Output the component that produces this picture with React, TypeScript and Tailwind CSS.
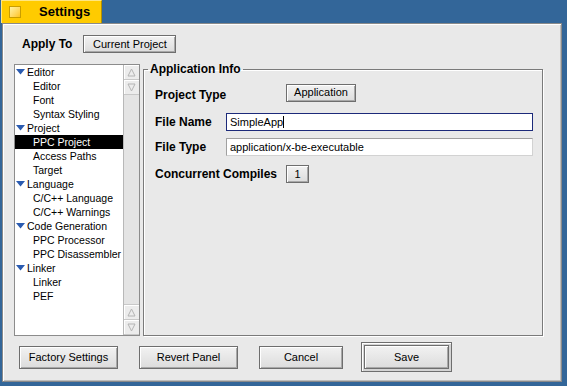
import React from 'react';

type Item = { label: string; header?: boolean; selected?: boolean };

const items: Item[] = [
  { label: 'Editor', header: true },
  { label: 'Editor' },
  { label: 'Font' },
  { label: 'Syntax Styling' },
  { label: 'Project', header: true },
  { label: 'PPC Project', selected: true },
  { label: 'Access Paths' },
  { label: 'Target' },
  { label: 'Language', header: true },
  { label: 'C/C++ Language' },
  { label: 'C/C++ Warnings' },
  { label: 'Code Generation', header: true },
  { label: 'PPC Processor' },
  { label: 'PPC Disassembler' },
  { label: 'Linker', header: true },
  { label: 'Linker' },
  { label: 'PEF' },
];

function BeButton({ children, className = '' }: { children: React.ReactNode; className?: string }) {
  return (
    <div
      className={`flex items-center justify-center whitespace-nowrap bg-gradient-to-b from-[#f2f2f2] to-[#dcdcdc] border border-[#6e6e6e] shadow-[inset_1px_1px_0_#ffffff,inset_-1px_-1px_0_#a8a8a8] text-[11px] text-black ${className}`}
    >
      {children}
    </div>
  );
}

function Arrow({ up }: { up?: boolean }) {
  return (
    <div className="h-[15px] flex items-center justify-center bg-[#ececec] border-b border-[#c8c8c8] shadow-[inset_1px_1px_0_#ffffff]">
      <svg width="9" height="9" viewBox="0 0 9 9">
        {up ? (
          <path d="M4.5 1 L8 8 L1 8 Z" fill="none" stroke="#b4b4b4" strokeWidth="1" />
        ) : (
          <path d="M1 1 L8 1 L4.5 8 Z" fill="none" stroke="#b4b4b4" strokeWidth="1" />
        )}
      </svg>
    </div>
  );
}

function Triangle() {
  return (
    <svg width="9" height="6" viewBox="0 0 9 6" className="shrink-0">
      <path d="M0 0 L9 0 L4.5 5.5 Z" fill="#2a5bb0" />
    </svg>
  );
}

export default function App() {
  const font = { fontFamily: '"Liberation Sans", Arial, sans-serif' };
  return (
    <div className="w-[567px] h-[386px] bg-[#336699] overflow-hidden flex flex-col" style={font}>
      {/* Tab */}
      <div className="ml-[1px] w-[101px] h-[23px] bg-[#ffcb00] border-t border-l border-[#ffe680] border-r border-r-[#b38f00] flex items-center shrink-0">
        <div className="ml-[7px] w-[12px] h-[12px] border border-[#c99d00] bg-gradient-to-br from-[#fff3a0] to-[#ffc400]" />
        <span className="ml-[18px] text-[13px] font-bold text-black">Settings</span>
      </div>

      {/* Window */}
      <div className="ml-[2px] w-[560px] h-[359px] bg-[#e9e9e9] border border-[#8a8a8a] shadow-[inset_1px_1px_0_#ffffff,inset_-1px_-1px_0_#bdbdbd] flex flex-col px-[11px]">
        <div className="mt-[11px] h-[18px] flex items-center">
          <span className="ml-[8px] text-[12px] font-bold text-black">Apply To</span>
          <BeButton className="ml-[11px] w-[93px] h-[18px]">Current Project</BeButton>
        </div>

        <div className="mt-[11px] flex h-[272px]">
          {/* List */}
          <div className="w-[126px] h-full bg-white border border-[#8c8c8c] flex overflow-hidden">
            <div className="flex-1 min-w-0 flex flex-col overflow-hidden">
              {items.map((it, i) => (
                <div
                  key={i}
                  className={`h-[14px] shrink-0 flex items-center whitespace-nowrap text-[10.5px] leading-none ${
                    it.selected ? 'bg-black text-white' : 'text-black'
                  } ${it.header ? 'pl-[1px]' : 'pl-[18px]'}`}
                >
                  {it.header && <Triangle />}
                  <span className={it.header ? 'ml-[2px]' : ''}>{it.label}</span>
                </div>
              ))}
            </div>
            <div className="w-[16px] shrink-0 border-l border-[#b8b8b8] bg-[#e4e4e4] flex flex-col justify-between">
              <div>
                <Arrow up />
                <Arrow />
              </div>
              <div className="border-t border-[#c8c8c8]">
                <Arrow up />
                <Arrow />
              </div>
            </div>
          </div>

          {/* Group box */}
          <fieldset className="ml-[3px] mt-[-2px] w-[400px] h-[274px] border border-[#7a7a7a] shadow-[1px_1px_0_#ffffff,inset_1px_1px_0_#ffffff] min-w-0">
            <legend className="ml-[4px] px-[2px] text-[12px] font-bold text-black leading-[14px]">
              Application Info
            </legend>
            <div className="flex flex-col pl-[11px] pr-[9px] pt-[7px]">
              <div className="h-[19px] flex items-center">
                <span className="w-[131px] text-[12px] font-bold text-black translate-y-[2px]">Project Type</span>
                <BeButton className="w-[70px] h-[18px]">Application</BeButton>
              </div>
              <div className="mt-[11px] h-[18px] flex items-center">
                <span className="w-[71px] text-[12px] font-bold text-black">File Name</span>
                <div className="flex-1 h-[18px] bg-white border border-[#1c2a7a] flex items-center pl-[3px] text-[11px] text-black">
                  SimpleApp<span className="w-[1px] h-[12px] bg-black" />
                </div>
              </div>
              <div className="mt-[7px] h-[18px] flex items-center">
                <span className="w-[71px] text-[12px] font-bold text-black">File Type</span>
                <div className="flex-1 h-[18px] bg-white border border-[#d2d2d2] border-t-[#a0a0a0] border-l-[#a0a0a0] flex items-center pl-[3px] text-[11px] text-black">
                  application/x-be-executable
                </div>
              </div>
              <div className="mt-[9px] h-[18px] flex items-center">
                <span className="w-[131px] text-[12px] font-bold text-black">Concurrent Compiles</span>
                <BeButton className="w-[23px] h-[18px]">1</BeButton>
              </div>
            </div>
          </fieldset>
        </div>

        {/* Bottom buttons */}
        <div className="mt-[6px] h-[30px] flex items-center pl-[5px]">
          <BeButton className="w-[99px] h-[23px]">Factory Settings</BeButton>
          <BeButton className="ml-[21px] w-[99px] h-[23px]">Revert Panel</BeButton>
          <BeButton className="ml-[21px] w-[84px] h-[23px]">Cancel</BeButton>
          <div className="ml-[18px] w-[91px] h-[30px] border border-[#6e6e6e] bg-[#d4d4d4] p-[2px] shadow-[inset_1px_1px_0_#ffffff]">
            <BeButton className="w-full h-full">Save</BeButton>
          </div>
        </div>
      </div>
    </div>
  );
}
